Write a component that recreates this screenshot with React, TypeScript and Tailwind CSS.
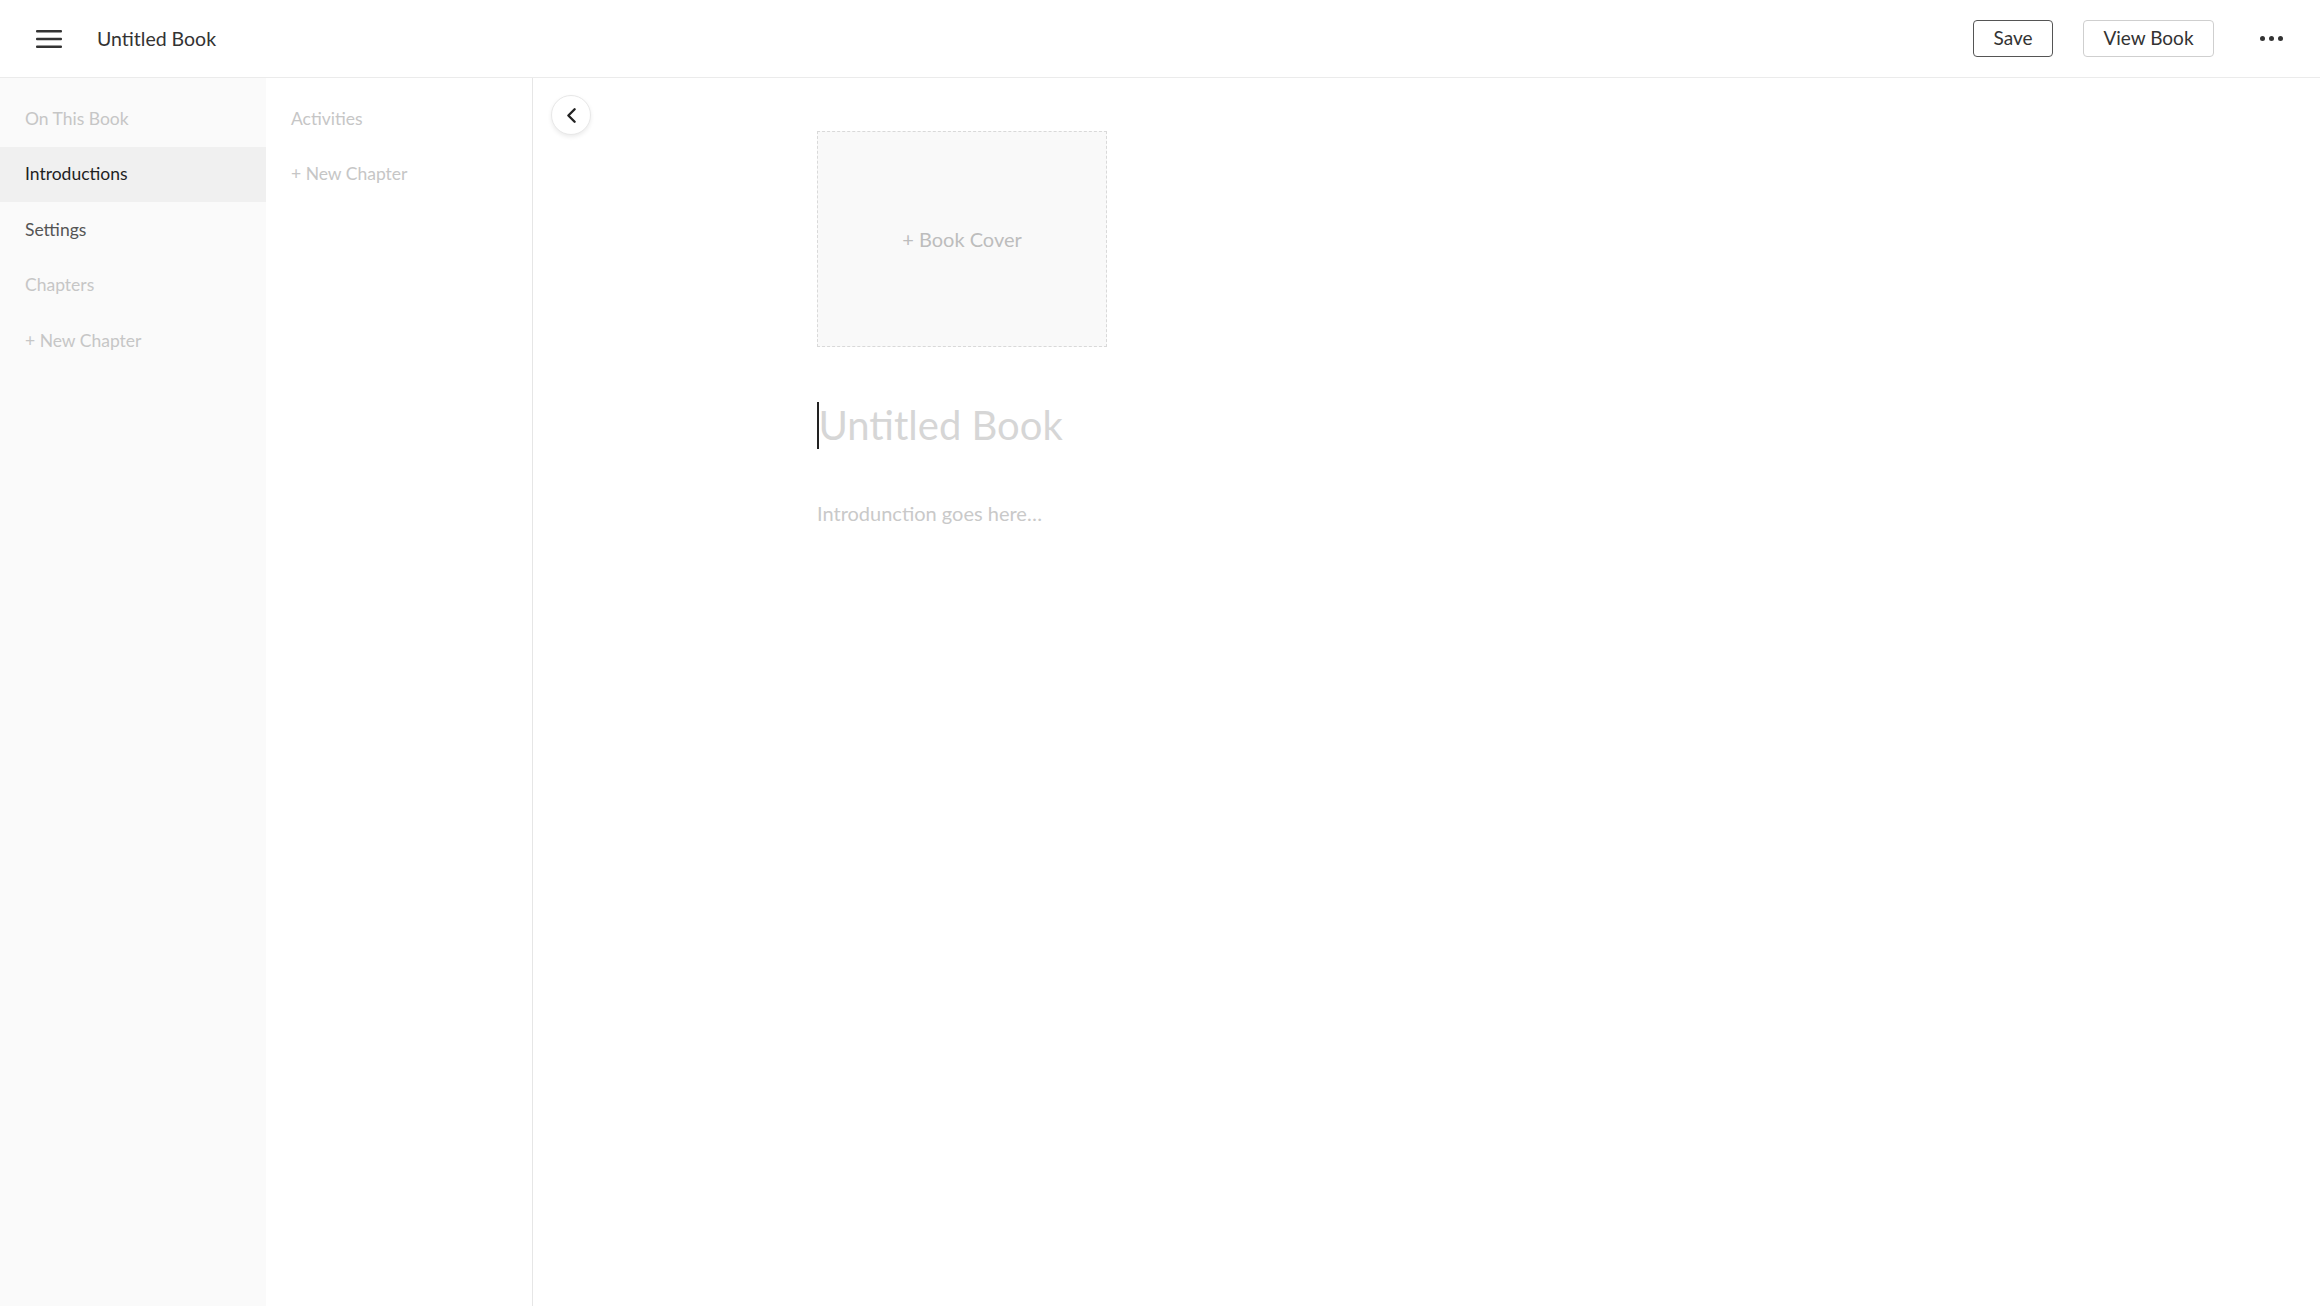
import { ChevronLeft } from 'lucide-react';

const font = { fontFamily: 'Lato, "Noto Sans", sans-serif' };

type NavItem = { label: string; tone: 'muted' | 'active' | 'normal' };

const bookNav: NavItem[] = [
  { label: 'On This Book', tone: 'muted' },
  { label: 'Introductions', tone: 'active' },
  { label: 'Settings', tone: 'normal' },
  { label: 'Chapters', tone: 'muted' },
  { label: '+ New Chapter', tone: 'muted' },
];

function NavRow({ item }: { item: NavItem }) {
  const toneClass =
    item.tone === 'active'
      ? 'bg-[#f0f0f0] text-[#1f1f1f]'
      : item.tone === 'normal'
        ? 'text-[#555]'
        : 'text-[#c6c6c6]';
  return <div className={`flex h-[55.5px] items-center px-[25px] text-[17.5px] ${toneClass}`}>{item.label}</div>;
}

function Hamburger() {
  return (
    <svg width="26" height="20" viewBox="0 0 26 20" className="text-[#333]">
      <rect x="0" y="1" width="26" height="2.6" rx="1" fill="currentColor" />
      <rect x="0" y="8.7" width="26" height="2.6" rx="1" fill="currentColor" />
      <rect x="0" y="16.4" width="26" height="2.6" rx="1" fill="currentColor" />
    </svg>
  );
}

export default function App() {
  return (
    <div className="flex h-screen flex-col bg-white" style={font}>
      <header className="flex h-[78px] shrink-0 items-center border-b border-[#ebebeb] pl-9 pr-[37px]">
        <Hamburger />
        <span className="ml-[35px] text-[19.5px] text-[#333]">Untitled Book</span>
        <div className="ml-auto flex items-center">
          <button
            type="button"
            className="h-[37px] w-20 rounded-[4px] border border-[#555] text-[19px] text-[#333]"
          >
            Save
          </button>
          <button
            type="button"
            className="ml-[30px] h-[37px] w-[131px] rounded-[4px] border border-[#cfcfcf] text-[19px] text-[#333]"
          >
            View Book
          </button>
          <div className="ml-[46px] flex items-center gap-[4px]">
            <span className="h-[5px] w-[5px] rounded-full bg-[#333]" />
            <span className="h-[5px] w-[5px] rounded-full bg-[#333]" />
            <span className="h-[5px] w-[5px] rounded-full bg-[#333]" />
          </div>
        </div>
      </header>
      <div className="flex min-h-0 flex-1">
        <aside className="w-[266px] shrink-0 bg-[#fafafa] pt-[13px]">
          {bookNav.map((item) => (
            <NavRow key={item.label} item={item} />
          ))}
        </aside>
        <aside className="w-[267px] shrink-0 border-r border-[#e6e6e6] pt-[13px]">
          <div className="flex h-[55.5px] items-center px-[25px] text-[17.5px] text-[#c6c6c6]">Activities</div>
          <div className="flex h-[55.5px] items-center px-[25px] text-[17.5px] text-[#c6c6c6]">+ New Chapter</div>
        </aside>
        <main className="relative flex-1 pl-[284px] pt-[53px]">
          <button
            type="button"
            className="absolute left-[18px] top-[17px] flex h-10 w-10 items-center justify-center rounded-full border border-[#e8e8e8] bg-white text-[#222] shadow-[0_2px_4px_rgba(0,0,0,0.08)]"
          >
            <ChevronLeft size={25} strokeWidth={2.3} />
          </button>
          <div className="flex h-[216px] w-[290px] items-center justify-center border border-dashed border-[#d9d9d9] bg-[#f9f9f9] text-[20px] text-[#bdbdbd]">
            + Book Cover
          </div>
          <div className="mt-[54px] flex h-12 items-center">
            <span className="h-[47px] w-[1.5px] bg-[#222]" />
            <span className="text-[40px] leading-none text-[#d6d6d6]">Untitled Book</span>
          </div>
          <p className="mt-[49px] text-[20px] leading-[30px] text-[#c9c9c9]">Introdunction goes here…</p>
        </main>
      </div>
    </div>
  );
}
